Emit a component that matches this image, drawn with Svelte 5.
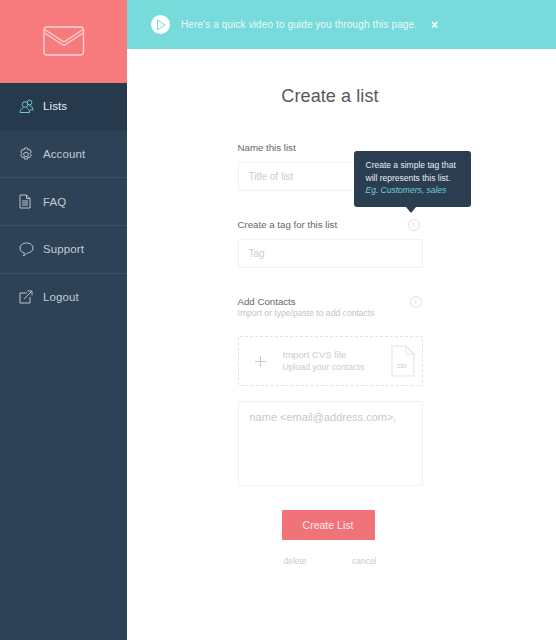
<script>
  const nav = [
    { id: 'lists', label: 'Lists' },
    { id: 'account', label: 'Account' },
    { id: 'faq', label: 'FAQ' },
    { id: 'support', label: 'Support' },
    { id: 'logout', label: 'Logout' }
  ];
</script>

<div class="page">
  <aside class="side">
    <div class="logo">
      <svg width="42" height="31" viewBox="0 0 42 31" fill="none" stroke="#fbd3d3" stroke-width="1.4">
        <rect x="1" y="1" width="39.500" height="28" rx="3" />
        <path d="M1.500 3.500 21 16 40 3.500" />
        <path d="M1.500 7 21 19.500 40 7" />
      </svg>
    </div>
    <nav>
      {#each nav as item}
        <div class="item" class:active={item.id === 'lists'}>
          <span class="ico">
            {#if item.id === 'lists'}
              <svg width="15" height="15" viewBox="0 0 15 15" fill="none" stroke="#6fc5cc" stroke-width="1">
                <circle cx="6" cy="5.500" r="2.800" />
                <circle cx="10.500" cy="3.500" r="2.400" />
                <path d="M1 13.500c0-3 2-4 3.500-4.800M7.500 8.700c1.500.8 3 1.800 3 4.800H1" />
                <path d="M10 6.500c2 .3 4 1.500 4 4.500h-3" />
              </svg>
            {:else if item.id === 'account'}
              <svg width="14" height="15" viewBox="0 0 14 15" fill="none" stroke="#b9c2cb" stroke-width="1">
                <path d="M5.500 1h3l.5 2 1.800-.6 1.500 2.600-1.400 1.500 1.400 1.500-1.500 2.600-1.800-.6-.5 2h-3l-.5-2-1.800.6-1.500-2.600 1.400-1.500-1.400-1.500 1.500-2.600 1.800.6z" />
                <circle cx="7" cy="7.500" r="2.300" />
              </svg>
            {:else if item.id === 'faq'}
              <svg width="12" height="15" viewBox="0 0 12 15" fill="none" stroke="#b9c2cb" stroke-width="1">
                <path d="M1 1h6.500L11 4.500V14H1z" />
                <path d="M7.500 1v3.500H11M3 7h6M3 9h6M3 11h6" />
              </svg>
            {:else if item.id === 'support'}
              <svg width="15" height="15" viewBox="0 0 15 15" fill="none" stroke="#b9c2cb" stroke-width="1">
                <path d="M7.500 1C3.800 1 1 3 1 6s2.500 4.800 4.500 5c0 1-.5 2-1.300 2.700C6 13.400 7.500 12.300 8.300 11 11.500 10.800 14 9 14 6s-2.800-5-6.500-5z" />
              </svg>
            {:else}
              <svg width="14" height="14" viewBox="0 0 14 14" fill="none" stroke="#b9c2cb" stroke-width="1">
                <path d="M8 3H1v10h10V7" />
                <path d="M5 9l7.500-7.500M8.500 1H13v4.500" />
              </svg>
            {/if}
          </span>
          <span class="label">{item.label}</span>
        </div>
      {/each}
    </nav>
  </aside>

  <main class="main">
    <div class="banner">
      <span class="play">
        <svg width="10" height="12" viewBox="0 0 10 12" fill="none" stroke="#77dbdc" stroke-width="1">
          <path d="M1.500 1 9 6l-7.500 5z" />
        </svg>
      </span>
      <span class="msg">Here's a quick video to guide you through this page.</span>
      <span class="close">×</span>
    </div>

    <div class="content">
      <h1>Create a list</h1>

      <form class="form">
        <div class="field name">
          <div class="lab">Name this list</div>
          <div class="input">Title of list</div>
        </div>

        <div class="field tag">
          <div class="labrow">
            <div class="lab">Create a tag for this list</div>
            <span class="info">i</span>
            <div class="tip">
              <div>Create a simple tag that</div>
              <div>will represents this list.</div>
              <div class="eg">Eg. Customers, sales</div>
            </div>
          </div>
          <div class="input">Tag</div>
        </div>

        <div class="field contacts">
          <div class="labrow">
            <div class="lab">Add Contacts</div>
            <span class="info">i</span>
          </div>
          <div class="sub">Import or type/paste to add contacts</div>
        </div>

        <div class="drop">
          <svg class="plus" width="11" height="11" viewBox="0 0 11 11" stroke="#c9c9c9" stroke-width="1">
            <path d="M5.500 0v11M0 5.500h11" />
          </svg>
          <div class="droptext">
            <div class="d1">Import CVS file</div>
            <div class="d2">Upload your contacts</div>
          </div>
          <div class="csv">
            <svg width="24" height="32" viewBox="0 0 24 32" fill="none" stroke="#e6e6e6" stroke-width="1.200">
              <path d="M1 1h14l8 8v22H1z" />
              <path d="M15 1v8h8" />
            </svg>
            <span>.csv</span>
          </div>
        </div>

        <div class="area">name &lt;email@address.com&gt;,</div>

        <div class="btn">Create List</div>

        <div class="links">
          <span>delete</span>
          <span>cancel</span>
        </div>
      </form>
    </div>
  </main>
</div>

<style>
  :global(body) {
    margin: 0;
    background: #fff;
  }
  .page {
    display: flex;
    width: 556px;
    height: 640px;
    overflow: hidden;
    font-family: "Liberation Sans", Arial, sans-serif;
  }
  .side {
    width: 127px;
    flex: none;
    background: #2e4257;
  }
  .logo {
    height: 83px;
    background: #f77a7c;
    display: flex;
    align-items: center;
    justify-content: center;
  }
  .item {
    height: 46.700px;
    display: flex;
    align-items: center;
    border-bottom: 1px solid #3d5064;
    color: #c3cbd2;
    font-size: 11.500px;
    letter-spacing: 0.1px;
  }
  .item:last-child {
    border-bottom: none;
  }
  .item.active {
    background: #26394d;
    color: #e6ebef;
    border-bottom-color: #26394d;
  }
  .ico {
    width: 43px;
    flex: none;
    padding-left: 19px;
    box-sizing: border-box;
    display: flex;
    align-items: center;
  }
  .main {
    flex: 1;
    min-width: 0;
  }
  .banner {
    height: 49px;
    background: #77dbdc;
    display: flex;
    align-items: center;
    padding-left: 24px;
    color: #eafafa;
    font-size: 10px;
    letter-spacing: 0.12px;
  }
  .play {
    width: 19px;
    height: 19px;
    border-radius: 50%;
    background: #fff;
    display: flex;
    align-items: center;
    justify-content: center;
    flex: none;
    margin-right: 11px;
  }
  .msg {
    width: 238px;
    white-space: nowrap;
  }
  .close {
    margin-left: 12px;
    color: #fff;
    font-size: 12px;
    font-weight: bold;
  }
  .content {
    display: flex;
    flex-direction: column;
    align-items: center;
    padding-right: 23px;
  }
  h1 {
    margin: 36px 0 0;
    font-size: 18px;
    line-height: 22px;
    font-weight: 400;
    color: #55595d;
    letter-spacing: 0.1px;
  }
  .form {
    width: 185px;
    margin-top: 34px;
    display: flex;
    flex-direction: column;
  }
  .lab {
    font-size: 9.700px;
    line-height: 13px;
    color: #63676b;
  }
  .input {
    height: 27px;
    border: 1px solid #f1f1f1;
    border-radius: 2px;
    margin-top: 8px;
    padding-left: 10px;
    display: flex;
    align-items: center;
    font-size: 10px;
    color: #cccccc;
  }
  .tag {
    margin-top: 27px;
  }
  .labrow {
    display: flex;
    justify-content: space-between;
    align-items: center;
    position: relative;
    height: 13px;
  }
  .info {
    width: 10px;
    height: 10px;
    border: 1px solid #e2e2e2;
    border-radius: 50%;
    font-size: 7px;
    line-height: 10px;
    text-align: center;
    color: #d6d6d6;
    margin-right: 3px;
  }
  .contacts .info {
    margin-right: 1px;
  }
  .tip {
    position: absolute;
    left: 116px;
    top: -67px;
    width: 117px;
    height: 56px;
    box-sizing: border-box;
    padding: 8px 0 0 12px;
    background: #2a3d51;
    border-radius: 3px;
    color: #e8edf1;
    font-size: 8.500px;
    line-height: 12.500px;
  }
  .tip::after {
    content: "";
    position: absolute;
    left: 52px;
    bottom: -6px;
    border-left: 5px solid transparent;
    border-right: 5px solid transparent;
    border-top: 6px solid #2a3d51;
  }
  .eg {
    color: #72cdd3;
    font-style: italic;
  }
  .contacts {
    margin-top: 27px;
  }
  .sub {
    font-size: 8.600px;
    line-height: 11px;
    color: #c4c4c4;
  }
  .drop {
    margin-top: 17px;
    height: 48px;
    border: 1px dashed #e4e4e4;
    border-radius: 2px;
    display: flex;
    align-items: center;
    position: relative;
  }
  .plus {
    margin-left: 16px;
  }
  .droptext {
    margin-left: 17px;
    font-size: 9.500px;
    line-height: 13px;
    color: #cccccc;
  }
  .d2 {
    font-size: 8.700px;
  }
  .csv {
    position: absolute;
    right: 7px;
    top: 8px;
    width: 24px;
    height: 32px;
  }
  .csv span {
    position: absolute;
    left: 5px;
    top: 17px;
    font-size: 6.500px;
    color: #cfcfcf;
  }
  .area {
    margin-top: 15px;
    height: 75px;
    border: 1px solid #f1f1f1;
    border-radius: 2px;
    padding: 8px 0 0 11px;
    font-size: 11px;
    line-height: 15px;
    color: #c8c8c8;
  }
  .btn {
    margin: 24px 0 0 44px;
    width: 93px;
    height: 30px;
    background: #f1737a;
    border-radius: 1px;
    display: flex;
    align-items: center;
    justify-content: center;
    color: #fde8e8;
    font-size: 10.500px;
  }
  .links {
    display: flex;
    justify-content: space-between;
    margin-top: 16px;
    padding: 0 46px;
    font-size: 8.500px;
    color: #cccccc;
  }
</style>
